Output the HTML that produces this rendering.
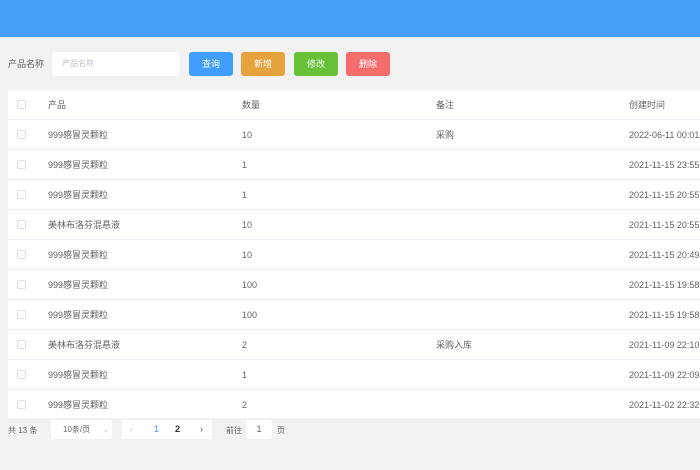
<!DOCTYPE html>
<html><head><meta charset="utf-8"><style>
*{margin:0;padding:0;box-sizing:border-box}
body{width:700px;height:470px;background:#f2f2f2;font-family:"Liberation Sans","Noto Sans CJK SC",sans-serif;font-size:9px;color:#606266;position:relative;overflow:hidden}
.hd{position:absolute;left:0;top:0;width:700px;height:37px;background:#469ff6}
.abs{position:absolute}
.btn{position:absolute;top:52px;height:24px;width:44px;border-radius:3px;color:#fff;text-align:center;line-height:24px;font-size:9px}
.tbl{position:absolute;left:8px;top:90px;width:692px;height:328px;background:#fff}
.row{position:absolute;left:0;width:692px;height:30px;border-bottom:1px solid #ebeef5;line-height:30px}
.row span{position:absolute}
.cb{position:absolute;left:9px;top:10px;width:9px;height:9px;border:1px solid #dcdfe6;border-radius:2px}
</style></head><body>
<div class="hd"></div>
<div class="abs" style="left:8px;top:57px">产品名称</div>
<div class="abs" style="left:52px;top:52px;width:127px;height:24px;background:#fff;border-radius:3px;color:#c0c4cc;line-height:24px;padding-left:10px;font-size:8px">产品名称</div>
<div class="btn" style="left:189px;background:#409eff">查询</div>
<div class="btn" style="left:241px;background:#e6a23c">新增</div>
<div class="btn" style="left:294px;background:#67c23a">修改</div>
<div class="btn" style="left:346px;background:#f56c6c">删除</div>
<div class="tbl">
<div class="row" style="top:0"><i class="cb"></i><span style="left:40px">产品</span><span style="left:234px">数量</span><span style="left:428px">备注</span><span style="left:621px">创建时间</span></div>
<div class="row" style="top:30px"><i class="cb"></i><span style="left:40px">999感冒灵颗粒</span><span style="left:234px">10</span><span style="left:428px">采购</span><span style="left:621px">2022-06-11 00:01</span></div>
<div class="row" style="top:60px"><i class="cb"></i><span style="left:40px">999感冒灵颗粒</span><span style="left:234px">1</span><span style="left:621px">2021-11-15 23:55</span></div>
<div class="row" style="top:90px"><i class="cb"></i><span style="left:40px">999感冒灵颗粒</span><span style="left:234px">1</span><span style="left:621px">2021-11-15 20:55</span></div>
<div class="row" style="top:120px"><i class="cb"></i><span style="left:40px">美林布洛芬混悬液</span><span style="left:234px">10</span><span style="left:621px">2021-11-15 20:55</span></div>
<div class="row" style="top:150px"><i class="cb"></i><span style="left:40px">999感冒灵颗粒</span><span style="left:234px">10</span><span style="left:621px">2021-11-15 20:49</span></div>
<div class="row" style="top:180px"><i class="cb"></i><span style="left:40px">999感冒灵颗粒</span><span style="left:234px">100</span><span style="left:621px">2021-11-15 19:58</span></div>
<div class="row" style="top:210px"><i class="cb"></i><span style="left:40px">999感冒灵颗粒</span><span style="left:234px">100</span><span style="left:621px">2021-11-15 19:58</span></div>
<div class="row" style="top:240px"><i class="cb"></i><span style="left:40px">美林布洛芬混悬液</span><span style="left:234px">2</span><span style="left:428px">采购入库</span><span style="left:621px">2021-11-09 22:10</span></div>
<div class="row" style="top:270px"><i class="cb"></i><span style="left:40px">999感冒灵颗粒</span><span style="left:234px">1</span><span style="left:621px">2021-11-09 22:09</span></div>
<div class="row" style="top:300px;border:none"><i class="cb"></i><span style="left:40px">999感冒灵颗粒</span><span style="left:234px">2</span><span style="left:621px">2021-11-02 22:32</span></div>
</div>
<div class="abs" style="left:8px;top:425px;font-size:8px">共 13 条</div>
<div class="abs" style="left:51px;top:420px;width:61px;height:19px;background:#fff;border-radius:3px;font-size:8px;line-height:19px;padding-left:12px">10条/页 <span style="color:#c0c4cc;margin-left:10px">⌄</span></div>
<div class="abs" style="left:122px;top:420px;width:90px;height:19px;background:#fff;line-height:19px;font-size:9px">
<span class="abs" style="left:8px;color:#c0c4cc">‹</span><span class="abs" style="left:32px;color:#409eff">1</span><span class="abs" style="left:53px;color:#303133;font-weight:bold">2</span><span class="abs" style="left:78px;color:#606266">›</span></div>
<div class="abs" style="left:226px;top:425px;font-size:8px">前往</div>
<div class="abs" style="left:246px;top:420px;width:26px;height:19px;background:#fff;border-radius:3px;text-align:center;line-height:19px">1</div>
<div class="abs" style="left:277px;top:425px;font-size:8px">页</div>
</body></html>
